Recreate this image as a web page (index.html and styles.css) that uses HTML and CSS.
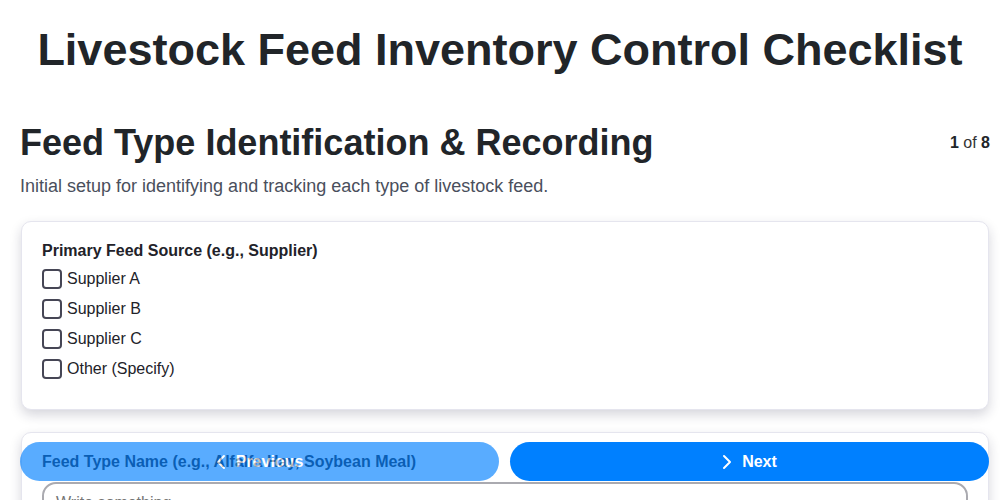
FILE: index.html
```html
<!DOCTYPE html>
<html lang="en">
  <head>
    <meta charset="UTF-8" />
    <meta name="viewport" content="width=device-width, initial-scale=1.0" />
    <title>Livestock Feed Inventory Control Checklist</title>
    <link rel="stylesheet" href="styles.css">
  </head>
  <body>
    <h1 class="page-title">Livestock Feed Inventory Control Checklist</h1>

    <div class="section-head">
      <h2 class="section-title">Feed Type Identification &amp; Recording</h2>
      <span class="step-count"><b>1</b> of <b>8</b></span>
    </div>
    <p class="section-desc">Initial setup for identifying and tracking each type of livestock feed.</p>

    <div class="card">
      <p class="field-label">Primary Feed Source (e.g., Supplier)</p>
      <label class="check-row"><input type="checkbox" class="check-box"> Supplier A</label>
      <label class="check-row"><input type="checkbox" class="check-box"> Supplier B</label>
      <label class="check-row"><input type="checkbox" class="check-box"> Supplier C</label>
      <label class="check-row"><input type="checkbox" class="check-box"> Other (Specify)</label>
    </div>

    <div class="card">
      <p class="field-label">Feed Type Name (e.g., Alfalfa Hay, Soybean Meal)</p>
      <textarea class="text-box" placeholder="Write something..."></textarea>
    </div>

    <div class="nav-bar">
      <button class="nav-btn prev-btn" disabled>
        <svg width="10" height="16" viewBox="0 0 10 16"><path d="M8 2 L2 8 L8 14" fill="none" stroke="currentColor" stroke-width="2" stroke-linecap="round" stroke-linejoin="round"/></svg>
        Previous
      </button>
      <button class="nav-btn next-btn">
        <svg width="10" height="16" viewBox="0 0 10 16"><path d="M2 2 L8 8 L2 14" fill="none" stroke="currentColor" stroke-width="2" stroke-linecap="round" stroke-linejoin="round"/></svg>
        Next
      </button>
    </div>
  </body>
</html>
```

FILE: styles.css
```css
body{
  margin: 0;
  padding: 0 10px 80px 20px;
  font-family: "Liberation Sans", Arial, sans-serif;
  color: #222229;
  background-color: white;
}
.page-title{
  margin: 24px 0 46px -10px;
  font-size: 45px;
  text-align: center;
  color: #212529;
}
.section-head{
  display: flex;
  justify-content: space-between;
  align-items: center;
}
.section-title{
  margin: 0;
  font-size: 36px;
  color: #212529;
}
.step-count{
  font-size: 16px;
  color: #333;
}
.step-count b{
  color: #212529;
}
.section-desc{
  margin: 12px 0 24px;
  font-size: 18px;
  color: #4a4f5c;
}
.card{
  border: 1px solid #e5e5ee;
  border-radius: 10px;
  padding: 20px 20px 25px;
  margin: 0 1px 22px;
  box-shadow: 0 5px 12px rgba(30, 30, 60, 0.18);
  background-color: white;
}
.field-label{
  margin: 0 0 4px;
  font-size: 16px;
  font-weight: bold;
  color: #222229;
}
.check-row{
  display: flex;
  align-items: center;
  height: 30px;
  font-size: 16px;
  color: #222229;
}
.check-box{
  appearance: none;
  width: 20px;
  height: 20px;
  margin: 0 5px 0 0;
  border: 2px solid #464655;
  border-radius: 4px;
  background-color: white;
}
.text-box{
  display: block;
  width: 100%;
  box-sizing: border-box;
  height: 90px;
  margin-top: 11px;
  padding: 10px 12px;
  border: 2px solid #aaaab0;
  border-radius: 14px;
  font-family: "Liberation Sans", Arial, sans-serif;
  font-size: 16px;
  resize: none;
}
.nav-bar{
  position: fixed;
  left: 20px;
  right: 11px;
  bottom: 19px;
  display: flex;
  gap: 11px;
}
.nav-btn{
  flex: 1;
  height: 39px;
  display: flex;
  align-items: center;
  justify-content: center;
  gap: 10px;
  border: none;
  border-radius: 20px;
  background-color: #0080ff;
  color: white;
  font-family: "Liberation Sans", Arial, sans-serif;
  font-size: 16px;
  font-weight: bold;
  cursor: pointer;
}
.prev-btn{
  opacity: 0.65;
}
```
